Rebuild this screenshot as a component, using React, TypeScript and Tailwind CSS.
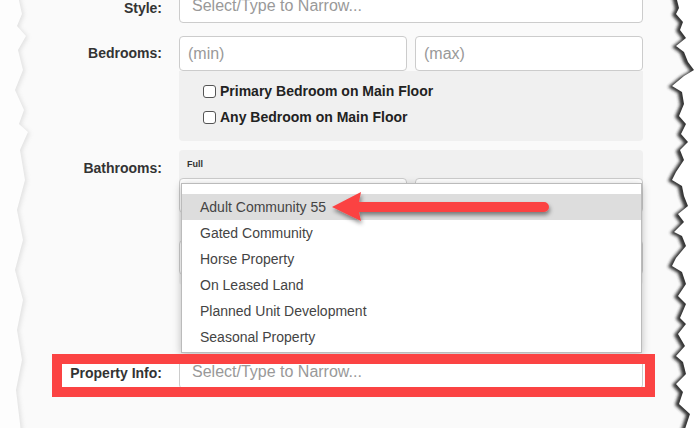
import React from "react";

const rightEdge: [number, number][] = [
  [676, -4], [679, 8], [676, 14], [683, 22], [680, 30], [686, 38], [676, 46], [684, 52], [688, 62], [694, 70],
  [684, 76], [672, 86], [682, 92], [684, 104], [679, 116], [686, 124], [681, 134], [688, 142], [680, 150],
  [684, 160], [676, 172], [672, 180], [682, 186], [684, 196], [688, 206], [678, 214], [684, 222], [674, 232],
  [682, 236], [686, 246], [676, 258], [672, 266], [682, 272], [686, 284], [678, 296], [686, 304], [680, 318],
  [686, 324], [678, 334], [685, 346], [676, 356], [683, 362], [686, 374], [676, 384], [683, 392], [679, 404],
  [690, 414], [684, 432],
];

const leftEdge: [number, number][] = [
  [18, -4], [22, 14], [17, 26], [26, 36], [18, 50], [23, 70], [15, 90], [24, 110], [19, 124], [28, 132],
  [20, 150], [25, 180], [17, 210], [23, 240], [15, 270], [23, 300], [17, 330], [22, 360], [16, 390], [21, 432],
];

const rightPoly = [...rightEdge, [710, 432], [710, -4]].map((p) => p.join(",")).join(" ");
const rightShadow = [...rightEdge.map(([x, y]) => [x - 4, y + 1]), [710, 432], [710, -4]]
  .map((p) => p.join(","))
  .join(" ");
const leftPoly = [[-10, -4], ...leftEdge, [-10, 432]].map((p) => p.join(",")).join(" ");
const leftShadow = [[-10, -4], ...leftEdge.map(([x, y]) => [x + 2, y + 1]), [-10, 432]]
  .map((p) => p.join(","))
  .join(" ");

function Label({ children, className = "" }: { children: React.ReactNode; className?: string }) {
  return (
    <div
      className={`w-[162px] shrink-0 flex items-center justify-end text-[14px] font-bold text-[#333] ${className}`}
    >
      {children}
    </div>
  );
}

function Input({ placeholder = "", className = "", pad = "pl-[8px]" }: { placeholder?: string; className?: string; pad?: string }) {
  return (
    <div
      className={`h-[35px] bg-white border border-[#cccccc] rounded-[4px] flex items-center ${pad} text-[16px] text-[#999] ${className}`}
    >
      {placeholder}
    </div>
  );
}

function Check({ label }: { label: string }) {
  return (
    <div className="h-[26px] flex items-center">
      <div className="w-[13px] h-[13px] border border-[#555] rounded-[3px] bg-white mr-[4px]" />
      <span className="text-[14px] font-bold text-[#222]">{label}</span>
    </div>
  );
}

const items = [
  "Adult Community 55",
  "Gated Community",
  "Horse Property",
  "On Leased Land",
  "Planned Unit Development",
  "Seasonal Property",
];

export default function App() {
  return (
    <div className="relative w-[700px] h-[428px] overflow-hidden bg-[#fafafa] font-['Liberation_Sans',Arial,sans-serif]">
      {/* white fill inside annotation box */}
      <div className="absolute left-[62px] top-[363px] w-[582px] h-[24px] bg-white" />

      <div className="relative flex flex-col">
        {/* Style */}
        <div className="flex items-center mt-[-12px]">
          <Label className="h-[35px] pt-[6px]">Style:</Label>
          <Input placeholder="Select/Type to Narrow..." pad="pl-[12px]" className="ml-[17px] w-[464px]" />
        </div>

        {/* Bedrooms */}
        <div className="flex items-start mt-[13px]">
          <Label className="h-[35px]">Bedrooms:</Label>
          <div className="ml-[17px] w-[464px] flex flex-col">
            <div className="flex gap-[8px]">
              <Input placeholder="(min)" className="w-[228px]" />
              <Input placeholder="(max)" className="w-[228px]" />
            </div>
            <div className="h-[70px] bg-[#f0f0f0] rounded-b-[4px] pl-[24px] pt-[7px] flex flex-col">
              <Check label="Primary Bedroom on Main Floor" />
              <Check label="Any Bedroom on Main Floor" />
            </div>
          </div>
        </div>

        {/* Bathrooms */}
        <div className="flex items-start mt-[9px]">
          <Label className="h-[14px] mt-[11px]">Bathrooms:</Label>
          <div className="ml-[17px] w-[464px] bg-[#f0f0f0] rounded-[4px] pt-[8px] pb-[10px] flex flex-col">
            <div className="pl-[8px] text-[9px] font-bold leading-[12px] text-[#333] mb-[8px]">Full</div>
            <div className="flex gap-[8px]">
              <Input className="w-[228px]" />
              <Input className="w-[228px]" />
            </div>
            <div className="h-[27px]" />
            <div className="flex gap-[8px]">
              <Input className="w-[228px]" />
              <Input className="w-[228px]" />
            </div>
          </div>
        </div>

        {/* Property Info */}
        <div className="flex items-center mt-[69px]">
          <Label className="h-[35px] pt-[4px]">Property Info:</Label>
          <Input placeholder="Select/Type to Narrow..." pad="pl-[12px]" className="ml-[17px] w-[464px]" />
        </div>
      </div>

      {/* dropdown */}
      <div className="absolute left-[181px] top-[183px] w-[461px] h-[170px] bg-white border border-[#bbbbbb] shadow-[0_2px_8px_rgba(0,0,0,0.25)] pt-[10px]">
        {items.map((t, i) => (
          <div
            key={t}
            className={`h-[26px] flex items-center pl-[18px] text-[14px] text-[#444] ${i === 0 ? "bg-[#dddddd]" : ""}`}
          >
            {t}
          </div>
        ))}
      </div>

      {/* annotation red box */}
      <div className="absolute left-[52px] top-[354px] w-[603px] h-[43px] border-[10px] border-[#fb4343]" />

      {/* arrow + torn edges */}
      <svg className="absolute left-0 top-0 pointer-events-none" width="700" height="428" viewBox="0 0 700 428">
        <defs>
          <filter id="arrowShadow" x="-10%" y="-50%" width="120%" height="200%">
            <feDropShadow dx="1" dy="3" stdDeviation="2" floodColor="#000" floodOpacity="0.45" />
          </filter>
          <filter id="blurR" x="-50%" y="-5%" width="200%" height="110%">
            <feGaussianBlur stdDeviation="1.6" />
          </filter>
          <filter id="blurL" x="-50%" y="-5%" width="200%" height="110%">
            <feGaussianBlur stdDeviation="2" />
          </filter>
        </defs>
        <g filter="url(#arrowShadow)">
          <path
            d="M332 207 L361 192 L359 202 L544 202 A5 5 0 0 1 544 212 L359 212 L361 221 Z"
            fill="#fb4343"
          />
        </g>
        <polygon points={leftShadow} fill="#999" opacity="0.25" filter="url(#blurL)" />
        <polygon points={leftPoly} fill="#fdfdfd" />
        <polygon points={rightShadow} fill="#2a2a2a" opacity="0.95" filter="url(#blurR)" />
        <polygon points={rightPoly} fill="#ffffff" />
      </svg>
    </div>
  );
}
